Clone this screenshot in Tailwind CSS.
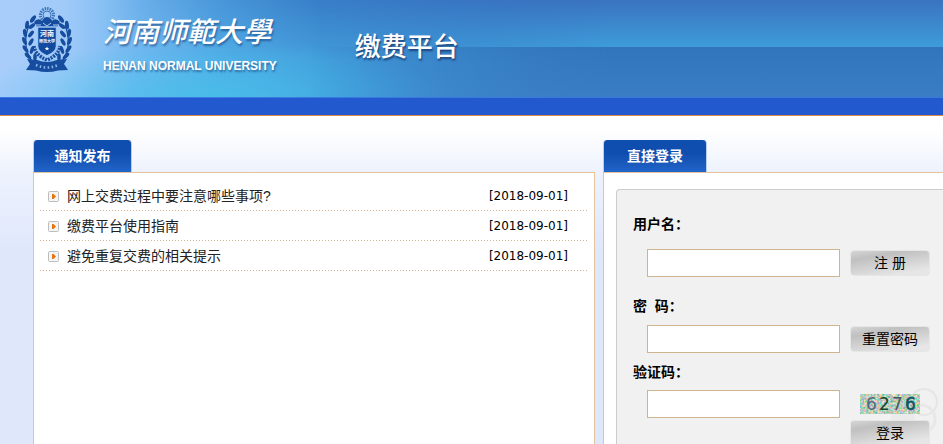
<!DOCTYPE html>
<html lang="zh-CN">
<head>
<meta charset="utf-8">
<meta name="viewport" content="width=device-width, initial-scale=1">
<title>河南师范大学缴费平台</title>
<script src="https://cdn.jsdelivr.net/npm/@tailwindcss/browser@4"></script>
</head>
<body class="flex min-h-screen flex-col bg-[linear-gradient(to_bottom,#fff_0px,#fff_130px,#edf2fd_172px,#dfe7fb_250px,#dfe7fb_100%)] font-['Liberation_Sans','Noto_Sans_CJK_SC',sans-serif] text-sm text-black">

<header class="border-b border-[#d98b45]">
  <div class="relative flex h-[97px] items-start bg-[linear-gradient(to_right,#a9cdfb_0px,#a2cbf9_60px,#72b8f0_140px,#52abe6_220px,#429cda_320px,#3d8cd0_480px,#3a7cc4_640px)]">
    <div class="absolute inset-0 bg-[linear-gradient(to_bottom,rgb(48_98_184/0.5)_0%,rgb(48_98_184/0)_60%)] mask-[linear-gradient(to_right,transparent_100px,black_320px)]"></div>
    <div class="absolute inset-x-0 bottom-0 h-14 bg-[radial-gradient(ellipse_240px_56px_at_210px_100%,rgb(70_192_234/0.8),rgb(70_192_234/0))]"></div>
    <div class="absolute inset-y-0 right-0 left-[311px] flex flex-col mask-[linear-gradient(to_right,transparent,black_300px)]">
      <div class="h-[47px] bg-linear-to-b from-[#3a73c0] to-[#3e9cda]"></div>
      <div class="flex-1 bg-linear-to-b from-[#3176bd] to-[#3a7dc5]"></div>
    </div>
    <svg class="relative mt-[5px] ml-[22px] h-[67px] w-[50px] shrink-0" viewBox="0 0 50 67" role="img" aria-label="校徽">
      <defs>
        <g id="branch" fill="#174d9e">
          <path d="M14 61C3 50 1 36 7 20" fill="none" stroke="#174d9e" stroke-width="1.3"/>
          <ellipse cx="11" cy="14" rx="2" ry="4.3" transform="rotate(35 11 14)"/>
          <ellipse cx="5" cy="20" rx="1.9" ry="4.2" transform="rotate(8 5 20)"/>
          <ellipse cx="10" cy="21" rx="1.8" ry="4" transform="rotate(50 10 21)"/>
          <ellipse cx="3" cy="28" rx="1.9" ry="4.2" transform="rotate(-12 3 28)"/>
          <ellipse cx="9" cy="29" rx="1.8" ry="4" transform="rotate(40 9 29)"/>
          <ellipse cx="2.5" cy="36" rx="1.9" ry="4.2" transform="rotate(-22 2.5 36)"/>
          <ellipse cx="9" cy="37" rx="1.8" ry="4" transform="rotate(30 9 37)"/>
          <ellipse cx="3.5" cy="44" rx="1.9" ry="4.2" transform="rotate(-35 3.5 44)"/>
          <ellipse cx="10" cy="45" rx="1.8" ry="4" transform="rotate(18 10 45)"/>
          <ellipse cx="6" cy="51" rx="1.9" ry="4.2" transform="rotate(-45 6 51)"/>
          <ellipse cx="13" cy="52" rx="1.8" ry="3.8"/>
        </g>
      </defs>
      <use href="#branch"/>
      <use href="#branch" transform="translate(50 0) scale(-1 1)"/>
      <circle cx="25" cy="10" r="6.5" fill="none" stroke="#3b73b8" stroke-width="3" stroke-dasharray="1.5 1"/>
      <circle cx="25" cy="10" r="4" fill="none" stroke="#3b73b8"/>
      <path d="M12 17q4-5 8-1 2-4 5-4t5 4q4-4 8 1l-3 5H15z" fill="#174d9e"/>
      <path d="M13 20h6m2-2 4 3 4-3m2 2h6" fill="none" stroke="#a9cdfb" stroke-width="1"/>
      <path d="M15.500 22h19v19q0 6-9.500 10-9.500-4-9.500-10z" fill="#124a9f" stroke="#9cc6f5" stroke-width="1.500"/>
      <path d="M12 41q1 9 13 14 12-5 13-14" fill="none" stroke="#174d9e" stroke-width="3.500" stroke-dasharray="2 1"/>
      <text x="25" y="31" text-anchor="middle" fill="#fff" font-size="7" font-weight="700" font-family="Noto Sans CJK SC">河南</text>
      <text x="25" y="38" text-anchor="middle" fill="#fff" font-size="4" font-weight="700" font-family="Noto Sans CJK SC">师范大学</text>
      <path d="M25 41.500l.7 1.500h1.600l-1.300 1 .5 1.600-1.500-1-1.500 1 .5-1.600-1.300-1h1.600z" fill="#fff"/>
      <path d="M5 54l10 1q10 4 20 0l10-1-3 5 4 6-10 .5q-11 3-22 0L4 65l4-6z" fill="#174d9e"/>
      <path d="M14 60q11 5 22 0" fill="none" stroke="#8db9ec" stroke-width="2.500" stroke-dasharray="1.500 2.500"/>
    </svg>
    <div class="relative ml-[31px] flex flex-col whitespace-nowrap text-white [text-shadow:1px_2px_2px_rgb(20_60_120/0.6)]">
      <p class="mt-[6px] font-['Noto_Sans_CJK_TC','Noto_Sans_CJK_SC',sans-serif] text-[28px] leading-[48px] font-medium italic">河南师範大學</p>
      <p class="text-xs leading-6 font-bold">HENAN NORMAL UNIVERSITY</p>
    </div>
    <h1 class="relative mt-[27px] ml-[78px] text-[26px] leading-10 font-medium whitespace-nowrap text-white [text-shadow:1px_2px_2px_rgb(20_50_100/0.8)]">缴费平台</h1>
  </div>
  <div class="h-[18px] border-t border-[#3a78e2] bg-[#2359cf]"></div>
</header>

<main class="flex flex-1 gap-2 pt-6 pl-[33px]">
  <section class="flex min-w-0 flex-1 flex-col">
    <h2 class="h-8 w-[99px] rounded-t-[4px] border-x border-[#b9cdec] bg-linear-to-b from-[#0f4dae] from-40% to-[#2264c8] text-center text-sm leading-8 font-bold text-white">通知发布</h2>
    <div class="flex-1 border border-b-0 border-[#e5c49d] bg-white px-[6px] pt-2">
      <ul>
        <li class="flex h-[30px] items-center bg-[repeating-linear-gradient(to_right,#d3b594_0px,#d3b594_1px,transparent_1px,transparent_3px)] bg-size-[100%_1px] bg-bottom bg-no-repeat pr-5 pl-2">
          <svg class="mr-2 size-[11px] shrink-0" viewBox="0 0 11 11" aria-hidden="true"><rect x=".5" y=".5" width="10" height="10" rx="1" fill="#f4f4f4" stroke="#bdbdbd"/><path d="M4 3v5h1.500l2.500-2.500L5.500 3z" fill="#e8730c"/></svg>
          <a href="#" class="flex-1 text-[#222]">网上交费过程中要注意哪些事项?</a>
          <time datetime="2018-09-01" class="font-['DejaVu_Sans',sans-serif] text-xs">[2018-09-01]</time>
        </li>
        <li class="flex h-[30px] items-center bg-[repeating-linear-gradient(to_right,#d3b594_0px,#d3b594_1px,transparent_1px,transparent_3px)] bg-size-[100%_1px] bg-bottom bg-no-repeat pr-5 pl-2">
          <svg class="mr-2 size-[11px] shrink-0" viewBox="0 0 11 11" aria-hidden="true"><rect x=".5" y=".5" width="10" height="10" rx="1" fill="#f4f4f4" stroke="#bdbdbd"/><path d="M4 3v5h1.500l2.500-2.500L5.500 3z" fill="#e8730c"/></svg>
          <a href="#" class="flex-1 text-[#222]">缴费平台使用指南</a>
          <time datetime="2018-09-01" class="font-['DejaVu_Sans',sans-serif] text-xs">[2018-09-01]</time>
        </li>
        <li class="flex h-[30px] items-center bg-[repeating-linear-gradient(to_right,#d3b594_0px,#d3b594_1px,transparent_1px,transparent_3px)] bg-size-[100%_1px] bg-bottom bg-no-repeat pr-5 pl-2">
          <svg class="mr-2 size-[11px] shrink-0" viewBox="0 0 11 11" aria-hidden="true"><rect x=".5" y=".5" width="10" height="10" rx="1" fill="#f4f4f4" stroke="#bdbdbd"/><path d="M4 3v5h1.500l2.500-2.500L5.500 3z" fill="#e8730c"/></svg>
          <a href="#" class="flex-1 text-[#222]">避免重复交费的相关提示</a>
          <time datetime="2018-09-01" class="font-['DejaVu_Sans',sans-serif] text-xs">[2018-09-01]</time>
        </li>
      </ul>
    </div>
  </section>

  <section class="flex w-[340px] shrink-0 flex-col">
    <h2 class="h-8 w-[104px] rounded-t-[4px] border-x border-[#b9cdec] bg-linear-to-b from-[#0f4dae] from-40% to-[#2264c8] text-center text-sm leading-8 font-bold text-white">直接登录</h2>
    <div class="flex flex-1 flex-col border-t border-l border-[#e5c49d] bg-white pt-4 pl-3">
      <form class="relative flex-1 rounded-tl-[4px] border-t border-l border-[#ccc] bg-[#f1f1f1] pt-[22px] pl-4">
        <svg class="absolute right-0 bottom-0 h-[62px] w-[60px]" viewBox="0 0 60 62" fill="none" aria-hidden="true"><circle cx="41" cy="20" r="13" stroke="#e5e5e5" stroke-width="2"/><circle cx="38" cy="37" r="14" stroke="#e8e8e8" stroke-width="3"/><path d="M8 33q8-8 24 0l2 24H8z" fill="#ebebeb"/></svg>
        <label for="user" class="relative block leading-6 font-bold">用户名：</label>
        <div class="relative mt-[13px] flex items-center gap-[10px] pl-[14px]">
          <input id="user" type="text" class="h-7 w-[193px] border border-[#cfb48f] bg-white px-1">
          <button type="button" class="h-[26px] w-20 rounded-[4px] border border-[#e6e6e6] bg-[linear-gradient(170deg,#d6d6d6_0%,#c0c0c0_25%,#e6e6e6_85%)] leading-6">注 册</button>
        </div>
        <label for="pass" class="relative mt-[17px] block leading-6 font-bold">密&nbsp; 码：</label>
        <div class="relative mt-[7px] flex items-center gap-[10px] pl-[14px]">
          <input id="pass" type="password" class="h-7 w-[193px] border border-[#cfb48f] bg-white px-1">
          <button type="button" class="h-[26px] w-20 rounded-[4px] border border-[#e6e6e6] bg-[linear-gradient(170deg,#d6d6d6_0%,#c0c0c0_25%,#e6e6e6_85%)] leading-6">重置密码</button>
        </div>
        <label for="code" class="relative mt-[7px] block leading-6 font-bold">验证码：</label>
        <div class="relative mt-[6px] flex items-center gap-5 pl-[14px]">
          <input id="code" type="text" class="h-7 w-[193px] border border-[#cfb48f] bg-white px-1">
          <svg class="h-5 w-[60px]" viewBox="0 0 60 20" role="img" aria-label="6276">
            <filter id="grain" x="0" y="0" width="100%" height="100%" color-interpolation-filters="sRGB"><feTurbulence type="fractalNoise" baseFrequency=".45" numOctaves="2" seed="4"/><feColorMatrix values="1.3 0 0 0 .08  0 .6 0 0 .5  0 0 .8 0 .33  0 0 0 0 1"/></filter>
            <rect width="60" height="20" filter="url(#grain)"/>
            <g font-family="DejaVu Sans" font-size="17"><text x="6" y="16" fill="#56687c">6</text><text x="19" y="16" fill="#16462f">2</text><text x="32" y="16" fill="#4c5960">7</text><text x="45" y="16" fill="#0c5863" stroke="#0c5863" stroke-width=".6">6</text></g>
          </svg>
        </div>
        <div class="relative mt-[2px] pl-[217px]">
          <button type="submit" class="block h-6 w-20 rounded-t-[4px] border border-b-0 border-[#e6e6e6] bg-[linear-gradient(170deg,#d6d6d6_0%,#c0c0c0_25%,#e6e6e6_85%)]">登录</button>
        </div>
      </form>
    </div>
  </section>
</main>
</body>
</html>
